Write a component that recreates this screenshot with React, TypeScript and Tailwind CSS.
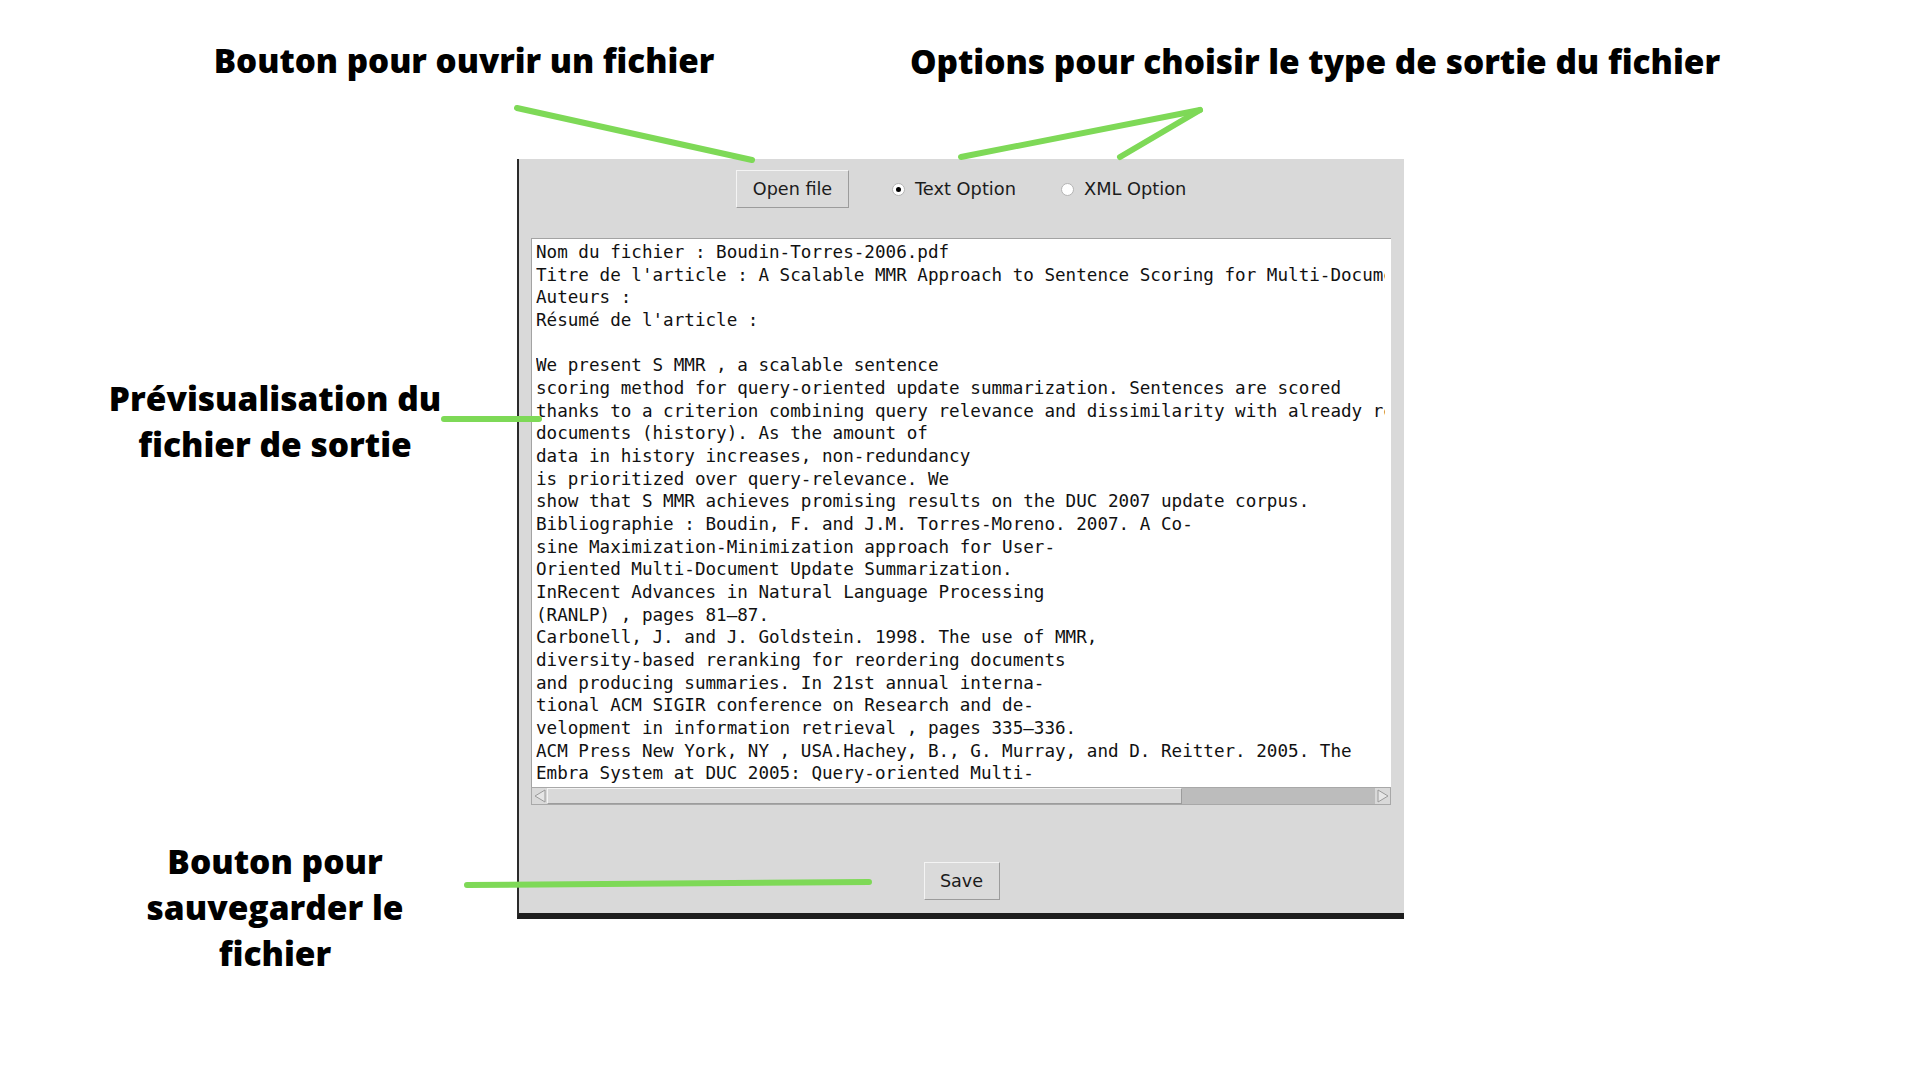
import React from 'react';

// Contenu affiché dans la zone de prévisualisation (texte brut, non replié).
const PREVIEW_LINES = [
  'Nom du fichier : Boudin-Torres-2006.pdf',
  "Titre de l'article : A Scalable MMR Approach to Sentence Scoring for Multi-Document Update Summarization",
  'Auteurs :',
  "Résumé de l'article :",
  '',
  'We present S MMR , a scalable sentence',
  'scoring method for query-oriented update summarization. Sentences are scored',
  'thanks to a criterion combining query relevance and dissimilarity with already read',
  'documents (history). As the amount of',
  'data in history increases, non-redundancy',
  'is prioritized over query-relevance. We',
  'show that S MMR achieves promising results on the DUC 2007 update corpus.',
  'Bibliographie : Boudin, F. and J.M. Torres-Moreno. 2007. A Co-',
  'sine Maximization-Minimization approach for User-',
  'Oriented Multi-Document Update Summarization.',
  'InRecent Advances in Natural Language Processing',
  '(RANLP) , pages 81–87.',
  'Carbonell, J. and J. Goldstein. 1998. The use of MMR,',
  'diversity-based reranking for reordering documents',
  'and producing summaries. In 21st annual interna-',
  'tional ACM SIGIR conference on Research and de-',
  'velopment in information retrieval , pages 335–336.',
  'ACM Press New York, NY , USA.Hachey, B., G. Murray, and D. Reitter. 2005. The',
  'Embra System at DUC 2005: Query-oriented Multi-',
];

function TkButton({ label, className = '' }: { label: string; className?: string }) {
  return (
    <button
      className={`flex h-[38px] items-center justify-center border border-t-[#f4f4f4] border-l-[#f4f4f4] border-r-[#9c9c9c] border-b-[#9c9c9c] bg-[#dadada] text-[17.6px] text-[#1c1c1c] font-['DejaVu_Sans',sans-serif] ${className}`}
    >
      {label}
    </button>
  );
}

function Radio({ label, checked }: { label: string; checked?: boolean }) {
  return (
    <label className="flex items-center gap-[10px] text-[17.8px] text-[#1c1c1c] font-['DejaVu_Sans',sans-serif]">
      <span className="flex h-[13px] w-[13px] items-center justify-center rounded-full border border-[#b4b4b4] bg-white">
        {checked && <span className="h-[5px] w-[5px] rounded-full bg-black" />}
      </span>
      {label}
    </label>
  );
}

function HScrollbar() {
  return (
    <div className="flex h-[18px] w-[860px] border border-[#a8a8a8] bg-[#bcbcbc]">
      <div className="flex w-[15px] items-center justify-center bg-[#d9d9d9]">
        <svg width="12" height="14" viewBox="0 0 12 14">
          <path d="M11 1 L1 7 L11 13 Z" fill="#e6e6e6" stroke="#9a9a9a" strokeWidth="1" />
        </svg>
      </div>
      <div className="w-[635px] border border-t-[#f4f4f4] border-l-[#f4f4f4] border-r-[#9c9c9c] border-b-[#9c9c9c] bg-[#d9d9d9]" />
      <div className="flex-1" />
      <div className="flex w-[15px] items-center justify-center bg-[#d9d9d9]">
        <svg width="12" height="14" viewBox="0 0 12 14">
          <path d="M1 1 L11 7 L1 13 Z" fill="#e6e6e6" stroke="#9a9a9a" strokeWidth="1" />
        </svg>
      </div>
    </div>
  );
}

function AppWindow() {
  return (
    <div className="flex h-[760px] w-[887px] flex-col border-l-2 border-b-[6px] border-l-[#2b2b2b] border-b-[#1d1d1d] bg-[#d9d9d9]">
      <div className="flex items-center pl-[217px] pt-[11px]">
        <TkButton label="Open file" className="w-[113px]" />
        <div className="ml-[43px]">
          <Radio label="Text Option" checked />
        </div>
        <div className="ml-[45px]">
          <Radio label="XML Option" />
        </div>
      </div>

      <div className="ml-[12px] mt-[30px] flex flex-col">
        <div className="h-[549px] w-[860px] border-t border-l border-[#a3a3a3] bg-white pl-[4px] pt-[2px]">
          <div className="h-full w-[849px] overflow-hidden font-['DejaVu_Sans_Mono',monospace] text-[17.6px] leading-[22.68px] text-[#111]">
            {PREVIEW_LINES.map((line, i) => (
              <div key={i} className="h-[22.68px] whitespace-pre">
                {line}
              </div>
            ))}
          </div>
        </div>
        <HScrollbar />
      </div>

      <div className="mt-[57px] flex justify-center">
        <TkButton label="Save" className="w-[76px]" />
      </div>
    </div>
  );
}

export default function App() {
  return (
    <div className="relative h-[1080px] w-[1920px] overflow-hidden bg-white font-['Open_Sans',sans-serif] text-black">
      {/* Titres du haut */}
      <div className="flex h-[159px] pt-[39px]">
        <h2 className="ml-[164px] w-[600px] whitespace-nowrap text-center text-[33.2px] font-extrabold leading-[44px]">
          Bouton pour ouvrir un fichier
        </h2>
        <h2 className="ml-[101px] w-[900px] whitespace-nowrap text-center text-[33.4px] font-extrabold leading-[44px]">
          Options pour choisir le type de sortie du fichier
        </h2>
      </div>

      <div className="flex">
        <div className="flex w-[517px] shrink-0 flex-col items-start">
          <p className="ml-[75px] mt-[216px] w-[400px] text-center text-[33.5px] font-extrabold leading-[46px]">
            Prévisualisation du
            <br />
            fichier de sortie
          </p>
          <p className="ml-[75px] mt-[371px] w-[400px] text-center text-[33.5px] font-extrabold leading-[46px]">
            Bouton pour
            <br />
            sauvegarder le
            <br />
            fichier
          </p>
        </div>
        <AppWindow />
      </div>

      {/* Flèches vertes d'annotation */}
      <svg className="pointer-events-none absolute left-0 top-0" width="1920" height="1080">
        <g stroke="#7ed957" strokeWidth="6" strokeLinecap="round" fill="none">
          <line x1="517" y1="108" x2="752" y2="160" />
          <line x1="961" y1="157" x2="1200" y2="110" />
          <line x1="1200" y1="110" x2="1120" y2="157" />
          <line x1="444" y1="419" x2="539" y2="419" />
          <line x1="467" y1="885" x2="869" y2="882" />
        </g>
      </svg>
    </div>
  );
}
